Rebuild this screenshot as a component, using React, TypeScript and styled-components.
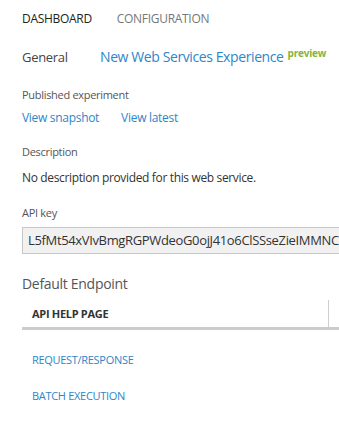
import React from "react";
import styled, { createGlobalStyle } from "styled-components";

const Global = createGlobalStyle`
  html, body { margin: 0; padding: 0; background: #fff; }
  body { font-family: "Open Sans", "Noto Sans", sans-serif; overflow: hidden; }
`;

const Page = styled.div`
  width: 339px;
  height: 427px;
  overflow: hidden;
  padding: 8px 0 0 22px;
  box-sizing: border-box;
`;

const Tabs = styled.nav`
  display: flex;
  gap: 25px;
  height: 20px;
  align-items: center;
`;

const Tab = styled.span<{ $active?: boolean }>`
  font-size: 12px;
  letter-spacing: -0.3px;
  color: ${(p) => (p.$active ? "#222" : "#777")};
`;

const GeneralRow = styled.div`
  display: flex;
  align-items: baseline;
  margin-top: 19px;
  height: 20px;
`;

const SectionTitle = styled.span`
  font-size: 13px;
  color: #444;
  width: 78px;
  letter-spacing: -0.3px;
`;

const BigLink = styled.a`
  font-size: 14px;
  color: #2e86c9;
  letter-spacing: -0.4px;
  text-decoration: none;
`;

const Badge = styled.span`
  align-self: flex-start;
  font-size: 10px;
  line-height: 12px;
  font-weight: 700;
  color: #86b43c;
  margin-left: 4px;
  letter-spacing: -0.2px;
`;

const Label = styled.div<{ $top: number }>`
  font-size: 11px;
  color: #555;
  margin-top: ${(p) => p.$top}px;
  height: 16px;
  line-height: 16px;
  letter-spacing: -0.3px;
`;

const LinkRow = styled.div`
  display: flex;
  gap: 22px;
  margin-top: 7px;
  height: 16px;
  line-height: 16px;
`;

const Link = styled.a`
  font-size: 12px;
  color: #2e86c9;
  letter-spacing: -0.3px;
  text-decoration: none;
`;

const Value = styled.div`
  font-size: 12px;
  color: #333;
  margin-top: 10px;
  height: 16px;
  line-height: 16px;
  letter-spacing: -0.35px;
`;

const KeyBox = styled.div`
  margin-top: 6px;
  width: 400px;
  height: 27px;
  box-sizing: border-box;
  border: 1px solid #c8c8c8;
  background: #f1f1f1;
  padding-left: 5px;
  font-size: 13px;
  line-height: 25px;
  color: #333;
  white-space: nowrap;
  letter-spacing: -0.35px;
`;

const Heading = styled.div`
  font-size: 14px;
  color: #555;
  margin-top: 20px;
  height: 20px;
  line-height: 20px;
  letter-spacing: -0.3px;
`;

const Table = styled.div`
  margin-top: 6px;
  width: 400px;
  height: 27px;
  border-bottom: 3px solid #cccccc;
  display: grid;
  grid-template-columns: 307px 1fr;
`;

const HeaderCell = styled.div`
  padding-left: 10px;
  font-size: 11px;
  font-weight: 700;
  color: #333;
  line-height: 27px;
  letter-spacing: -0.3px;
  border-right: 1px solid #cfcfcf;
`;

const Actions = styled.div`
  display: flex;
  flex-direction: column;
  gap: 20px;
  margin-top: 22px;
  padding-left: 10px;
`;

const Action = styled.a`
  font-size: 11px;
  color: #2e86c9;
  line-height: 16px;
  letter-spacing: -0.3px;
  text-decoration: none;
`;

export default function App() {
  return (
    <>
      <Global />
      <Page>
        <Tabs>
          <Tab $active>DASHBOARD</Tab>
          <Tab>CONFIGURATION</Tab>
        </Tabs>
        <GeneralRow>
          <SectionTitle>General</SectionTitle>
          <BigLink>New Web Services Experience</BigLink>
          <Badge>preview</Badge>
        </GeneralRow>
        <Label $top={20}>Published experiment</Label>
        <LinkRow>
          <Link>View snapshot</Link>
          <Link>View latest</Link>
        </LinkRow>
        <Label $top={18}>Description</Label>
        <Value>No description provided for this web service.</Value>
        <Label $top={19}>API key</Label>
        <KeyBox>L5fMt54xVIvBmgRGPWdeoG0ojJ41o6ClSSseZieIMMNC</KeyBox>
        <Heading>Default Endpoint</Heading>
        <Table>
          <HeaderCell>API HELP PAGE</HeaderCell>
          <div />
        </Table>
        <Actions>
          <Action>REQUEST/RESPONSE</Action>
          <Action>BATCH EXECUTION</Action>
        </Actions>
      </Page>
    </>
  );
}
